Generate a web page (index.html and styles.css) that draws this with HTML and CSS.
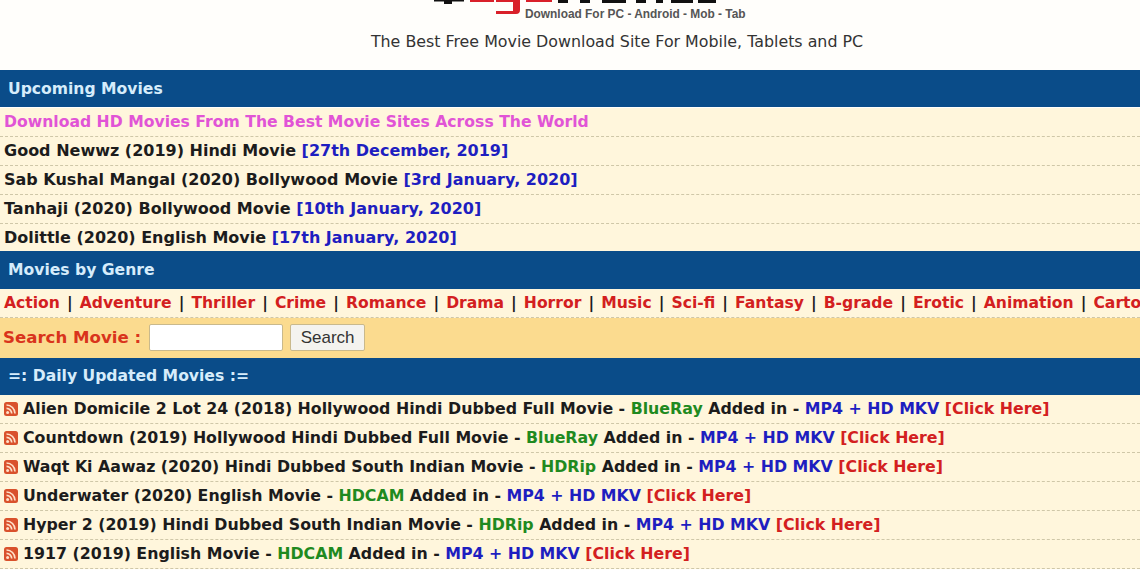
FILE: index.html
```html
<!DOCTYPE html>
<html lang="en">
<head>
<meta charset="utf-8">
<title>Movies</title>
<link rel="stylesheet" href="styles.css">
</head>
<body>
<header class="head">
  <div class="logo">
    <svg class="logo-art" width="300" height="16" viewBox="0 0 300 16" aria-hidden="true">
      <path class="blk" d="M4 0h30v1.5H4zM14 0h8v4h-8z"/>
      <path class="red" d="M40 0h24v2H40zM66 0h24v10q0 4-4 4H66v-3h17V2H66z"/>
      <path class="red" d="M96 0h26v2H96z"/>
      <path class="blk" d="M128 0h10v3h-10zM150 0h10v3h-10zM172 0h24v3h-24zM206 0h10v3h-10zM226 0h7v3h-7zM241 0h22v3h-22zM268 0h18v3h-18z"/>
    </svg>
    <div class="tag">Download For PC - Android - Mob - Tab</div>
  </div>
  <p class="lead">The Best Free Movie Download Site For Mobile, Tablets and PC</p>
</header>
<h2 class="bar bar-up">Upcoming Movies</h2>
<ul class="rows rows-up">
  <li class="row pink">Download HD Movies From The Best Movie Sites Across The World</li>
  <li class="row">Good Newwz (2019) Hindi Movie <span class="blue">[27th December, 2019]</span></li>
  <li class="row">Sab Kushal Mangal (2020) Bollywood Movie <span class="blue">[3rd January, 2020]</span></li>
  <li class="row">Tanhaji (2020) Bollywood Movie <span class="blue">[10th January, 2020]</span></li>
  <li class="row">Dolittle (2020) English Movie <span class="blue">[17th January, 2020]</span></li>
</ul>
<h2 class="bar bar-genre">Movies by Genre</h2>
<div class="genres"><span class="red-t">Action</span> | <span class="red-t">Adventure</span> | <span class="red-t">Thriller</span> | <span class="red-t">Crime</span> | <span class="red-t">Romance</span> | <span class="red-t">Drama</span> | <span class="red-t">Horror</span> | <span class="red-t">Music</span> | <span class="red-t">Sci-fi</span> | <span class="red-t">Fantasy</span> | <span class="red-t">B-grade</span> | <span class="red-t">Erotic</span> | <span class="red-t">Animation</span> | <span class="red-t">Cartoon</span></div>
<form class="search">
  <label class="search-label" for="q">Search Movie :</label>
  <input class="search-input" id="q" type="text">
  <button class="search-btn" type="button">Search</button>
</form>
<h2 class="bar">=: Daily Updated Movies :=</h2>
<ul class="rows">
  <li class="row feed"><svg class="rss" viewBox="0 0 14 14" aria-hidden="true"><rect width="14" height="14" rx="2.5" class="rss-bg"/><circle cx="3.6" cy="10.4" r="1.5" class="rss-fg"/><path class="rss-line" d="M2.5 6.3a5.2 5.2 0 0 1 5.2 5.2M2.5 3a8.5 8.5 0 0 1 8.5 8.5"/></svg><span>Alien Domicile 2 Lot 24 (2018) Hollywood Hindi Dubbed Full Movie - <span class="green">BlueRay</span> Added in - <span class="blue">MP4 + HD MKV</span> <span class="red-t">[Click Here]</span></span></li>
  <li class="row feed"><svg class="rss" viewBox="0 0 14 14" aria-hidden="true"><rect width="14" height="14" rx="2.5" class="rss-bg"/><circle cx="3.6" cy="10.4" r="1.5" class="rss-fg"/><path class="rss-line" d="M2.5 6.3a5.2 5.2 0 0 1 5.2 5.2M2.5 3a8.5 8.5 0 0 1 8.5 8.5"/></svg><span>Countdown (2019) Hollywood Hindi Dubbed Full Movie - <span class="green">BlueRay</span> Added in - <span class="blue">MP4 + HD MKV</span> <span class="red-t">[Click Here]</span></span></li>
  <li class="row feed"><svg class="rss" viewBox="0 0 14 14" aria-hidden="true"><rect width="14" height="14" rx="2.5" class="rss-bg"/><circle cx="3.6" cy="10.4" r="1.5" class="rss-fg"/><path class="rss-line" d="M2.5 6.3a5.2 5.2 0 0 1 5.2 5.2M2.5 3a8.5 8.5 0 0 1 8.5 8.5"/></svg><span>Waqt Ki Aawaz (2020) Hindi Dubbed South Indian Movie - <span class="green">HDRip</span> Added in - <span class="blue">MP4 + HD MKV</span> <span class="red-t">[Click Here]</span></span></li>
  <li class="row feed"><svg class="rss" viewBox="0 0 14 14" aria-hidden="true"><rect width="14" height="14" rx="2.5" class="rss-bg"/><circle cx="3.6" cy="10.4" r="1.5" class="rss-fg"/><path class="rss-line" d="M2.5 6.3a5.2 5.2 0 0 1 5.2 5.2M2.5 3a8.5 8.5 0 0 1 8.5 8.5"/></svg><span>Underwater (2020) English Movie - <span class="green">HDCAM</span> Added in - <span class="blue">MP4 + HD MKV</span> <span class="red-t">[Click Here]</span></span></li>
  <li class="row feed"><svg class="rss" viewBox="0 0 14 14" aria-hidden="true"><rect width="14" height="14" rx="2.5" class="rss-bg"/><circle cx="3.6" cy="10.4" r="1.5" class="rss-fg"/><path class="rss-line" d="M2.5 6.3a5.2 5.2 0 0 1 5.2 5.2M2.5 3a8.5 8.5 0 0 1 8.5 8.5"/></svg><span>Hyper 2 (2019) Hindi Dubbed South Indian Movie - <span class="green">HDRip</span> Added in - <span class="blue">MP4 + HD MKV</span> <span class="red-t">[Click Here]</span></span></li>
  <li class="row feed"><svg class="rss" viewBox="0 0 14 14" aria-hidden="true"><rect width="14" height="14" rx="2.5" class="rss-bg"/><circle cx="3.6" cy="10.4" r="1.5" class="rss-fg"/><path class="rss-line" d="M2.5 6.3a5.2 5.2 0 0 1 5.2 5.2M2.5 3a8.5 8.5 0 0 1 8.5 8.5"/></svg><span>1917 (2019) English Movie - <span class="green">HDCAM</span> Added in - <span class="blue">MP4 + HD MKV</span> <span class="red-t">[Click Here]</span></span></li>
</ul>
```
FILE: styles.css
```css
html, body { margin: 0; padding: 0; background: #fffefb; overflow: hidden; height: 570px; }
body { font-family: "DejaVu Sans", Verdana, sans-serif; color: #1c1c1c; }
.head { height: 70px; display: flex; flex-direction: column; align-items: center; }
.logo { width: 300px; height: 21px; margin-left: 20px; position: relative; }
.logo-art { position: absolute; left: 0; top: 0; }
.blk { fill: #111; }
.red { fill: #d9202a; }
.tag { position: absolute; left: 95px; top: 6px; font: 11.9px/16px "Liberation Sans", Arial, sans-serif; font-weight: 700; color: #555; white-space: nowrap; }
.lead { margin: 12px 0 0 94px; font-size: 15.85px; line-height: 18px; color: #333; }
.bar { margin: 0; height: 37px; line-height: 37px; padding-left: 8px; font-size: 15.6px; font-weight: 700; color: #d6ecfb; background: #0a4c89; }
.bar-up { line-height: 38px; }
.bar-genre { height: 38px; line-height: 38px; }
.rows { margin: 0; padding: 0; list-style: none; background: #fff6dc; }
.rows-up { margin-top: 1px; }
.rows-up .row { line-height: 27px; }
.rows-up .row:last-child { height: 27px; border-bottom: 0; line-height: 27px; }
.row { height: 28px; line-height: 26px; border-bottom: 1px dashed #cfc7a8; padding-left: 4px; font-size: 16px; font-weight: 700; white-space: nowrap; }
.pink { color: #e154d6; font-size: 15.65px; }
.blue { color: #1e1ec0; }
.green { color: #1f8a1f; }
.red-t { color: #d3201f; }
.genres { height: 29px; line-height: 28px; padding-left: 4px; background: #fff6dc; font-size: 15.6px; font-weight: 700; word-spacing: 1.6px; white-space: nowrap; overflow: hidden; border-bottom: 1px dashed #cfc7a8; box-sizing: border-box; }
.search { height: 40px; display: flex; align-items: center; background: #fbdb8f; padding: 0 0 1px 3px; box-sizing: border-box; }
.search-label { font-size: 16.6px; font-weight: 700; color: #d9341c; margin-right: 8px; }
.search-input { width: 134px; height: 27px; box-sizing: border-box; border: 1px solid #c9b98c; border-radius: 2px; background: #fff; padding: 0; margin-right: 7px; }
.search-btn { width: 75px; height: 27px; box-sizing: border-box; border: 1px solid #c9b98c; border-radius: 2px; background: #f4f3ef; font: 17px "Liberation Sans", Arial, sans-serif; color: #333; padding: 0; }
.feed { display: flex; align-items: center; gap: 5px; font-size: 15.8px; }
.rss { width: 14px; height: 14px; flex: none; }
.rss-bg { fill: #d9512c; }
.rss-fg { fill: #ffe0c8; }
.rss-line { fill: none; stroke: #ffe0c8; stroke-width: 1.7; }
```
